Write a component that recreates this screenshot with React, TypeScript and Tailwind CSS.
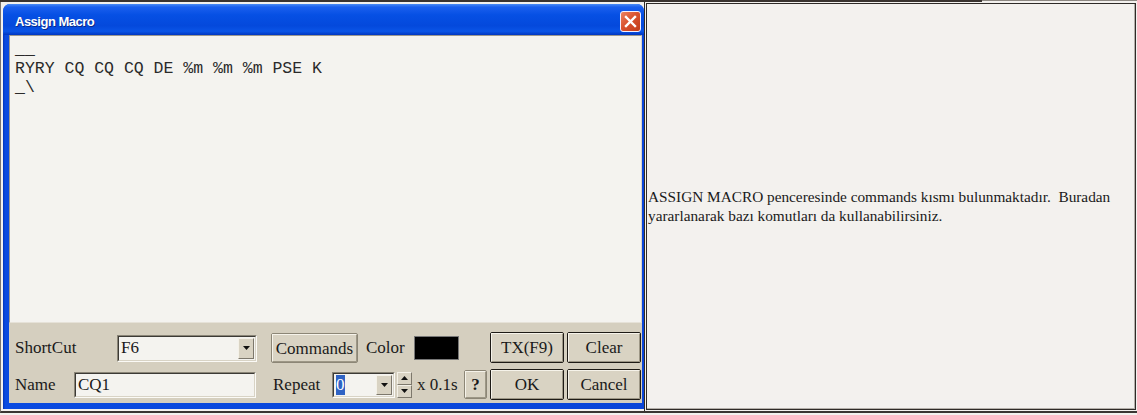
import React from "react";

const serif = { fontFamily: '"Liberation Serif", "Times New Roman", serif' };

const note = "ASSIGN MACRO penceresinde commands kısmı bulunmaktadır.\u00a0 Buradan yararlanarak bazı komutları da kullanabilirsiniz.";

function Btn({ w, h, children, def = false, bold = false }: { w: number; h: number; children: React.ReactNode; def?: boolean; bold?: boolean }) {
  return (
    <div
      className={`${def ? "border border-[#1e1b16]" : "border border-[#8c8676]"} rounded-[2px] flex-none`}
      style={{ width: w, height: h }}
    >
      <div className="w-full h-full border-t border-l border-t-[#f6f3ea] border-l-[#f6f3ea] border-b border-r border-b-[#9d9786] border-r-[#9d9786] bg-[#d9d3c3] flex items-center justify-center">
        <span className={`text-[17px] text-[#1a1a1a] leading-none ${bold ? "font-bold" : ""}`} style={serif}>
          {children}
        </span>
      </div>
    </div>
  );
}

function Arrow({ up = false }: { up?: boolean }) {
  return (
    <svg width="7" height="4" viewBox="0 0 7 4">
      {up ? <path d="M0 4 L3.5 0 L7 4 Z" fill="#111" /> : <path d="M0 0 L7 0 L3.5 4 Z" fill="#111" />}
    </svg>
  );
}

function DropBtn({ w, h }: { w: number; h: number }) {
  return (
    <div
      className="flex-none border border-t-[#f4f1e8] border-l-[#f4f1e8] border-b-[#7d786c] border-r-[#7d786c] bg-[#d9d3c3] flex items-center justify-center"
      style={{ width: w, height: h }}
    >
      <Arrow />
    </div>
  );
}

function Field({ w, h, children }: { w: number; h: number; children?: React.ReactNode }) {
  return (
    <div
      className="flex-none border border-t-[#8a8577] border-l-[#8a8577] border-b-[#fbfaf6] border-r-[#fbfaf6]"
      style={{ width: w, height: h }}
    >
      <div className="w-full h-full border border-t-[#3c3a35] border-l-[#3c3a35] border-b-[#d8d3c5] border-r-[#d8d3c5] bg-[#f4f3ef] flex items-center">
        {children}
      </div>
    </div>
  );
}

export default function App() {
  return (
    <div className="w-[1137px] h-[415px] bg-[#f3f1ee] overflow-hidden relative">
      {/* top page rule */}
      <div className="flex h-[2px]">
        <div className="w-[982px] h-[2px] bg-[#3a3430]" />
        <div className="flex-1 h-[1px] bg-[#8d8882]" />
      </div>
      <div className="flex h-[411px] border-b-[2px] border-b-[#3b3632] border-l border-l-[#7a746e]">
        {/* left cell with dialog */}
        <div className="w-[644px] flex-none pl-[2px] pt-[2px] border-r-[1px] border-r-[#2f2b28] flex flex-col">
          <div className="w-[641px] h-[405px] flex flex-col rounded-tl-[7px] rounded-tr-[7px] overflow-hidden bg-[#0a45d8]">
            {/* title bar */}
            <div className="h-[31px] flex-none flex items-center justify-between pl-[12px] pr-[3px] bg-[linear-gradient(to_bottom,#4a8cf5_0%,#1a5fee_10%,#0650e4_35%,#0449dc_70%,#0a54e6_88%,#0036c0_100%)]">
              <span
                className="text-white font-bold text-[13px] tracking-[-0.5px] mt-[5px] [text-shadow:1px_1px_0_#0a2a8a]"
                style={{ fontFamily: '"Liberation Sans", Tahoma, sans-serif' }}
              >
                Assign Macro
              </span>
              <div className="w-[21px] h-[21px] rounded-[3px] border border-[#f3f0ff] bg-[linear-gradient(135deg,#ec8462_0%,#d9522f_45%,#c13c19_100%)] flex items-center justify-center mt-[4px]">
                <svg width="13" height="13" viewBox="0 0 13 13">
                  <path d="M2 2 L11 11 M11 2 L2 11" stroke="#fff" strokeWidth="2.4" strokeLinecap="square" />
                </svg>
              </div>
            </div>
            {/* client */}
            <div className="flex-1 flex flex-col pl-[6px] pr-[2px] pb-[6px] bg-[linear-gradient(to_right,#0033b8_0px,#0a4ae0_2px,#0a45d8_100%)]">
              <div className="flex-1 flex flex-col bg-[#d5cfbf]">
                {/* editor */}
                <div className="h-[288px] flex-none border-t border-l border-t-[#9c988f] border-l-[#9c988f] border-r border-r-[#d8d5cd] border-b border-b-[#e6e2d8] bg-[#f4f3ef] pl-[5px] pt-[4px]">
                  <pre
                    className="text-[16.5px] leading-[19px] text-[#2a2a2a] whitespace-pre m-0"
                    style={{ fontFamily: '"Liberation Mono", "Courier New", monospace' }}
                  >
{"__\nRYRY CQ CQ CQ DE %m %m %m PSE K\n_\\"}
                  </pre>
                </div>
                {/* bottom panel */}
                <div className="flex-1 flex flex-col pt-[9px] gap-[5px] text-[#1a1a1a]" style={serif}>
                  <div className="h-[32px] flex items-center pl-[6px]">
                    <span className="w-[102px] flex-none text-[17px]">ShortCut</span>
                    <div className="w-[140px] h-[27px] flex-none relative">
                      <Field w={140} h={27}>
                        <span className="pl-[2px] text-[17px] flex-1">F6</span>
                        <div className="pr-[1px]">
                          <DropBtn w={16} h={21} />
                        </div>
                      </Field>
                    </div>
                    <div className="ml-[14px]">
                      <Btn w={87} h={30}>Commands</Btn>
                    </div>
                    <span className="ml-[8px] w-[48px] flex-none text-[17px]">Color</span>
                    <div className="w-[45px] h-[24px] flex-none bg-black border border-[#777]" />
                    <div className="ml-[31px] -mt-[2px]">
                      <Btn w={74} h={31} def>TX(F9)</Btn>
                    </div>
                    <div className="ml-[3px] -mt-[2px]">
                      <Btn w={74} h={31} def>Clear</Btn>
                    </div>
                  </div>
                  <div className="h-[31px] flex items-center pl-[6px]">
                    <span className="w-[59px] flex-none text-[17px]">Name</span>
                    <Field w={182} h={26}>
                      <span className="pl-[2px] text-[17px]">CQ1</span>
                    </Field>
                    <span className="ml-[17px] w-[59px] flex-none text-[17px]">Repeat</span>
                    <Field w={63} h={26}>
                      <span className="ml-[2px] bg-[#2f63c4] text-white text-[17px] leading-[20px] px-[0px]">0</span>
                      <span className="flex-1" />
                      <div className="pr-[1px]">
                        <DropBtn w={16} h={20} />
                      </div>
                    </Field>
                    <div className="ml-[2px] w-[15px] h-[26px] flex-none flex flex-col">
                      <div className="flex-1 border border-t-[#f4f1e8] border-l-[#f4f1e8] border-b-[#7d786c] border-r-[#7d786c] bg-[#d9d3c3] flex items-center justify-center">
                        <Arrow up />
                      </div>
                      <div className="flex-1 border border-t-[#f4f1e8] border-l-[#f4f1e8] border-b-[#7d786c] border-r-[#7d786c] bg-[#d9d3c3] flex items-center justify-center">
                        <Arrow />
                      </div>
                    </div>
                    <span className="ml-[5px] w-[47px] flex-none text-[17px] whitespace-nowrap">x 0.1s</span>
                    <Btn w={23} h={29} bold>?</Btn>
                    <div className="ml-[3px]">
                      <Btn w={74} h={31} def>OK</Btn>
                    </div>
                    <div className="ml-[3px]">
                      <Btn w={74} h={31} def>Cancel</Btn>
                    </div>
                  </div>
                </div>
              </div>
            </div>
          </div>
        </div>
        {/* right cell */}
        <div className="flex-1 pl-[1px] pt-[1px] pr-[1px] pb-[1px]">
          <div className="w-full h-full border border-[#2e2a27]">
            <div className="w-full h-full border-r border-b border-r-[#b3afa9] border-b-[#b3afa9] flex items-center pl-[1px] pr-[2px]">
              <p className="text-[15.3px] leading-[19.5px] text-[#1a1a1a] m-0" style={serif}>
                {note}
              </p>
            </div>
          </div>
        </div>
      </div>
    </div>
  );
}
